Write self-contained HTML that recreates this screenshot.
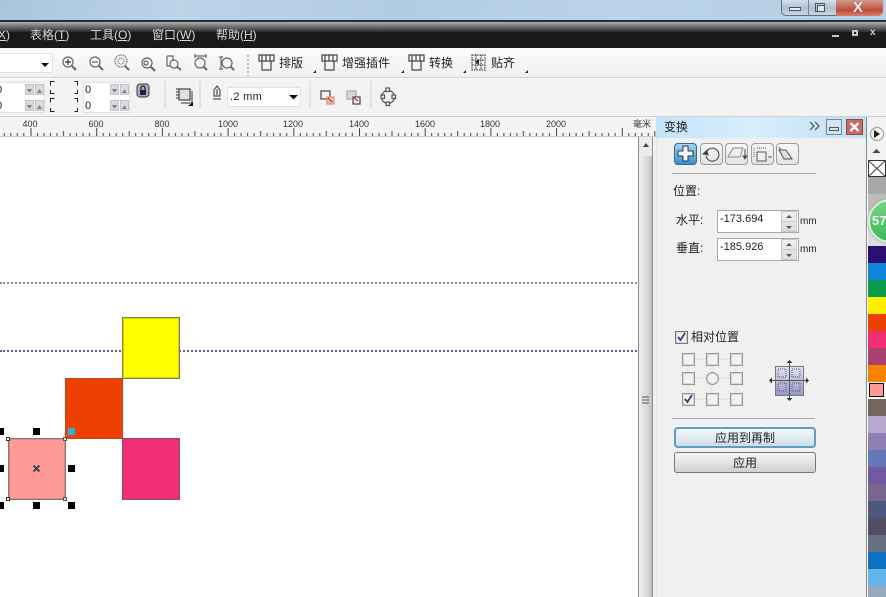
<!DOCTYPE html>
<html><head><meta charset="utf-8">
<style>
html,body{margin:0;padding:0}
body{width:886px;height:597px;overflow:hidden;position:relative;background:#fff;font-family:"Liberation Sans","Noto Sans CJK SC",sans-serif;color:#222}
.a{position:absolute}
.t{position:absolute;white-space:nowrap;line-height:14px}
.m{color:#d8d8d8;font-size:12px;top:28px}
.b{font-size:12px;color:#222}
.r{font-size:9px;color:#333;top:119px;line-height:11px;transform:translateX(-50%)}
.inp{position:absolute;background:#fff;border:1px solid #e2e2e2;box-sizing:border-box}
.sp{position:absolute;width:9px;height:11px;background:#d8dce0;border:1px solid #c4c4c4;box-sizing:border-box}
.cb{position:absolute;width:13px;height:13px;box-sizing:border-box;border:1px solid #969696;background:#f2f2f2;box-shadow:inset 0 0 0 1px #d6d6d6}
.h{position:absolute;width:7px;height:7px;background:#000}
.c{position:absolute;left:868px;width:18px;height:17px}
.tb{position:absolute;top:143px;width:23px;height:22px;box-sizing:border-box;border:1px solid #9c9c9c;border-radius:4px;background:linear-gradient(#f8f8f8,#e4e4e4)}
</style></head><body>

<!-- desktop title bar -->
<div class="a" style="left:0;top:0;width:886px;height:20px;background:linear-gradient(100deg,#a9c5de 0%,#bcd3e8 20%,#b2cce3 45%,#bad3e9 70%,#b5cee4 100%)"></div>
<div class="a" style="left:781px;top:0;width:55px;height:16px;box-sizing:border-box;border:1px solid #5b6f84;border-top:0;border-right:0;border-radius:0 0 0 5px;background:linear-gradient(#d4dfe9,#aebfd0 55%,#c9d6e2)"></div>
<div class="a" style="left:808px;top:0;width:1px;height:16px;background:#6f8498"></div>
<div class="a" style="left:836px;top:0;width:47px;height:16px;border-radius:0 0 5px 0;background:linear-gradient(#d09a90,#bc4a3a 65%,#d8806f)"></div>
<div class="a" style="left:789px;top:7px;width:12px;height:4px;box-sizing:border-box;background:#e6edf3;border:1px solid #445566"></div>
<div class="a" style="left:817px;top:5px;width:8px;height:7px;box-sizing:border-box;background:#dfe7ee;border:1px solid #445566"></div>
<div class="a" style="left:815px;top:3px;width:10px;height:9px;box-sizing:border-box;border:1px solid #445566"></div>
<div class="t" style="left:853px;top:1px;font-size:15px;font-weight:bold;color:#f5f0ee;text-shadow:0 0 1px #555">X</div>

<!-- menu bar -->
<div class="a" style="left:0;top:20px;width:886px;height:2px;background:#20303c"></div>
<div class="a" style="left:0;top:22px;width:886px;height:11px;background:linear-gradient(#aeaeaa,#1c1c1c)"></div>
<div class="a" style="left:0;top:32px;width:886px;height:16px;background:#1a1a1a"></div>
<div class="t m" style="left:-2px"><u>X</u>)</div>
<div class="t m" style="left:30px">表格(<u>T</u>)</div>
<div class="t m" style="left:90px">工具(<u>O</u>)</div>
<div class="t m" style="left:152px">窗口(<u>W</u>)</div>
<div class="t m" style="left:216px">帮助(<u>H</u>)</div>
<div class="a" style="left:832px;top:35px;width:7px;height:2px;background:#c8c8c8"></div>
<div class="a" style="left:852px;top:30px;width:6px;height:6px;box-sizing:border-box;border:2px solid #c8c8c8"></div>
<div class="t" style="left:870px;top:26px;font-size:10px;font-weight:bold;color:#c8c8c8">x</div>

<!-- toolbars -->
<div class="a" style="left:0;top:48px;width:886px;height:30px;background:linear-gradient(#fbfbfb,#f0f0f0)"></div>
<div class="a" style="left:0;top:77px;width:886px;height:1px;background:#d0d0d0"></div>
<div class="a" style="left:0;top:78px;width:886px;height:38px;background:#f3f3f3;border-top:1px solid #fdfdfd;box-sizing:border-box"></div>
<div class="a" style="left:0;top:116px;width:886px;height:1px;background:#cfcfcf"></div>

<div class="inp" style="left:-2px;top:53px;width:55px;height:20px"></div>
<!-- prop bar fields -->
<div class="inp" style="left:-2px;top:82px;width:47px;height:31px"></div>
<div class="inp" style="left:83px;top:82px;width:47px;height:31px"></div>
<div class="sp" style="left:25px;top:84px"></div><div class="sp" style="left:35px;top:84px"></div>
<div class="sp" style="left:25px;top:100px"></div><div class="sp" style="left:35px;top:100px"></div>
<div class="sp" style="left:110px;top:84px"></div><div class="sp" style="left:120px;top:84px"></div>
<div class="sp" style="left:110px;top:100px"></div><div class="sp" style="left:120px;top:100px"></div>
<div class="inp" style="left:227px;top:87px;width:74px;height:20px"></div>

<svg class="a" style="left:0;top:48px" width="660" height="69" fill="none" stroke="#555" stroke-width="1.2">
  <path d="M41 15h8l-4 4z" fill="#111" stroke="none"/>
  <g stroke="#666">
    <circle cx="68" cy="14" r="5"/><path d="M72 18l4 4" stroke-width="2"/><path d="M65 14h6M68 11v6" stroke="#333"/>
    <circle cx="95" cy="14" r="5"/><path d="M99 18l4 4" stroke-width="2"/><path d="M92 14h6"/>
    <circle cx="121" cy="13" r="6" stroke-dasharray="1.5 1"/><circle cx="121" cy="13" r="3" stroke-dasharray="1 1"/><path d="M125 18l4 4" stroke-width="2"/>
    <circle cx="147" cy="15" r="5"/><circle cx="146" cy="15" r="2"/><path d="M151 19l4 4" stroke-width="2"/>
    <path d="M167 8h6v5M167 8v10h4"/><circle cx="174" cy="16" r="4"/><path d="M177 19l4 3" stroke-width="2"/>
    <path d="M195 8h11M195 6v4M206 6v4"/><circle cx="200" cy="15" r="5"/><path d="M204 19l3 3" stroke-width="2"/>
    <path d="M219 9h4M221 9v12M219 21h4"/><circle cx="227" cy="15" r="5"/><path d="M231 19l3 3" stroke-width="2"/>
  </g>
  <path d="M248 7v21" stroke="#bbb" stroke-dasharray="2 2" stroke-width="2"/>
  <g stroke="#444">
    <path d="M259 7h15v6h-15zM262 7v6M266 7v6M270 7v6M262 13v9h9v-9"/>
    <path d="M322 7h15v6h-15zM325 7v6M329 7v6M333 7v6M325 13v9h9v-9"/>
    <path d="M409 7h15v6h-15zM412 7v6M416 7v6M420 7v6M412 13v9h9v-9"/>
    <path d="M472 7h13v15h-13zM472 12h13M472 17h13M476 7v15M481 7v15" stroke-dasharray="1.5 1"/>
  </g>
  <path d="M475 14l4-3v6z" fill="#333" stroke="none"/>
  <g fill="#222" stroke="none">
    <path d="M316 25v-3l-3 3zM404 25v-3l-3 3zM466 25v-3l-3 3zM528 25v-3l-3 3z"/>
  </g>
  <!-- prop bar -->
  <g stroke="#222" stroke-width="1">
    <path d="M54.500 33.500h-4v4M50.500 42v3.500h4M54.500 50.500h-4v4M50.500 60v3.500h4M74.500 33.500h3v4M77.500 42v3.500h-3M74.500 50.500h3v4M77.500 60v3.500h-3"/>
  </g>
  <g fill="#7c8088" stroke="none">
    <path d="M27 41l5 0-2.500 4zM37 45h5l-2.500-4zM27 57h5l-2.500 4zM37 61h5l-2.500-4zM112 41h5l-2.500 4zM122 45h5l-2.500-4zM112 57h5l-2.500 4zM122 61h5l-2.500-4z"/>
  </g>
  <rect x="137" y="36" width="12" height="13" rx="3" fill="#a9a9c0" stroke="#555"/>
  <rect x="140" y="42" width="6" height="5" fill="#222040" stroke="none"/>
  <path d="M141 42v-2a2 2 0 0 1 4 0v2" stroke="#222040"/>
  <path d="M165 33v27M200 33v27M310 33v27M371 33v27" stroke="#d6d6d6"/>
  <rect x="179" y="41" width="11" height="11" fill="#dfdfe4" stroke="#444"/>
  <path d="M176 41h3M176 44h3M176 47h3M176 50h3M181 55h11v-12" stroke="#555"/>
  <path d="M188 58h5v-4z" fill="#111" stroke="none"/>
  <path d="M214 42l3-4 3 4v6h-6z" fill="#eee" stroke="#555"/><path d="M217 41v6M213 51h8" stroke="#555"/>
  <path d="M289 47h9l-4.500 4.500z" fill="#111" stroke="none"/>
  <rect x="321" y="43" width="9" height="8" fill="#f3f3f3" stroke="#444"/>
  <rect x="327" y="49" width="7" height="7" fill="#f0b8a8" stroke="#e09080"/>
  <path d="M328 50l4 4" stroke="#b63820"/>
  <rect x="347" y="43" width="9" height="8" fill="#d5d5e8" stroke="#aaa"/>
  <rect x="353" y="49" width="7" height="7" fill="#f3e8e2" stroke="#444"/>
  <path d="M354 50l4 3" stroke="#b63820"/>
  <circle cx="388" cy="49" r="6.500" stroke="#555"/>
  <g fill="#f2f2f2" stroke="#555"><rect x="386" y="40" width="3.500" height="3.500"/><rect x="386" y="54" width="3.500" height="3.500"/><rect x="381" y="47" width="3.500" height="3.500"/><rect x="392" y="47" width="3.500" height="3.500"/></g>
</svg>
<div class="t b" style="left:279px;top:56px">排版</div>
<div class="t b" style="left:342px;top:56px">增强插件</div>
<div class="t b" style="left:429px;top:56px">转换</div>
<div class="t b" style="left:491px;top:56px">贴齐</div>

<div class="t" style="left:-4px;top:83px;font-size:11px">0</div>
<div class="t" style="left:-4px;top:99px;font-size:11px">0</div>
<div class="t" style="left:85px;top:83px;font-size:11px">0</div>
<div class="t" style="left:85px;top:99px;font-size:11px">0</div>
<div class="t" style="left:230px;top:90px;font-size:11px;letter-spacing:.3px">.2 mm</div>

<!-- ruler -->
<div class="a" style="left:0;top:117px;width:656px;height:20px;background:#f4f4f4;border-bottom:1px solid #c8c8c8;box-sizing:border-box"></div>
<svg class="a" style="left:0;top:117px" width="656" height="20">
  <defs><pattern id="p" x="30.500" y="0" width="65.700" height="20" patternUnits="userSpaceOnUse">
    <path d="M.5 11v8M7 16v3M13.500 16v3M20 16v3M26.500 16v3M33 14v5M39.500 16v3M46 16v3M52.500 16v3M59 16v3" stroke="#444" fill="none"/>
  </pattern></defs>
  <rect width="656" height="20" fill="url(#p)"/>
</svg>
<div class="t r" style="left:30px">400</div>
<div class="t r" style="left:96px">600</div>
<div class="t r" style="left:162px">800</div>
<div class="t r" style="left:228px">1000</div>
<div class="t r" style="left:293px">1200</div>
<div class="t r" style="left:359px">1400</div>
<div class="t r" style="left:425px">1600</div>
<div class="t r" style="left:490px">1800</div>
<div class="t r" style="left:556px">2000</div>
<div class="t r" style="left:642px">毫米</div>

<!-- canvas guides -->
<div class="a" style="left:0;top:282px;width:637px;height:0;border-top:2px dotted #8a8aa8"></div>
<div class="a" style="left:0;top:350px;width:637px;height:0;border-top:2px dotted #5f5f92"></div>

<!-- shapes -->
<div class="a" style="left:122px;top:317px;width:58px;height:62px;box-sizing:border-box;background:#ffff00;border:1px solid #85803c;box-shadow:inset 0 0 0 1px rgba(133,128,60,.35)"></div>
<div class="a" style="left:65px;top:378px;width:58px;height:61px;box-sizing:border-box;background:#ee4000;border:1px solid #c04a20"></div>
<div class="a" style="left:122px;top:438px;width:58px;height:62px;box-sizing:border-box;background:#f22e74;border:1px solid #a5456c;box-shadow:inset 0 0 0 1px rgba(165,69,108,.35)"></div>
<div class="a" style="left:8px;top:438px;width:58px;height:62px;box-sizing:border-box;background:#ff9a96;border:1px solid #8c7272;box-shadow:inset 0 0 0 1px rgba(140,114,114,.35)"></div>
<div class="a" style="left:68px;top:428px;width:7px;height:7px;background:#2fb0dc"></div>
<div class="h" style="left:-3px;top:428px"></div><div class="h" style="left:33px;top:428px"></div>
<div class="h" style="left:-3px;top:465px"></div><div class="h" style="left:68px;top:465px"></div>
<div class="h" style="left:-3px;top:502px"></div><div class="h" style="left:33px;top:502px"></div><div class="h" style="left:68px;top:502px"></div>
<div class="a" style="left:6px;top:437px;width:2px;height:2px;background:#fff;border:1px solid #333"></div>
<div class="a" style="left:63px;top:437px;width:2px;height:2px;background:#ddd;border:1px solid #555"></div>
<div class="a" style="left:6px;top:497px;width:2px;height:2px;background:#fff;border:1px solid #333"></div>
<div class="a" style="left:63px;top:497px;width:2px;height:2px;background:#ddd;border:1px solid #555"></div>
<svg class="a" style="left:32px;top:464px" width="10" height="10"><path d="M1.500 1.500l6 6M7.500 1.500l-6 6" stroke="#3c4a50" stroke-width="2"/></svg>

<!-- scrollbar -->
<div class="a" style="left:638px;top:137px;width:1px;height:460px;background:#8c8c8c"></div>
<div class="a" style="left:639px;top:137px;width:13px;height:460px;background:#ececec"></div>
<div class="a" style="left:639px;top:156px;width:13px;height:441px;background:linear-gradient(90deg,#f0f0f0,#d6d6d6 70%,#bcbcbc)"></div>
<div class="a" style="left:652px;top:137px;width:1px;height:460px;background:#909090"></div>
<svg class="a" style="left:642px;top:142px" width="8" height="6"><path d="M4 1l3 4H1z" fill="#444"/></svg>
<svg class="a" style="left:642px;top:396px" width="8" height="9"><path d="M0 1h7M0 4h7M0 7h7" stroke="#555"/></svg>

<!-- panel -->
<div class="a" style="left:653px;top:137px;width:214px;height:460px;background:#f0f0f0"></div>
<div class="a" style="left:656px;top:137px;width:1px;height:460px;background:#e6e6e6"></div>
<div class="a" style="left:656px;top:117px;width:211px;height:21px;background:linear-gradient(90deg,#c2e3f8,#d8eefc 45%,#bfe0f6)"></div>
<div class="t" style="left:664px;top:120px;font-size:12px;color:#222">变换</div>
<svg class="a" style="left:809px;top:121px" width="12" height="10" fill="none" stroke="#666" stroke-width="1.400"><path d="M1 1l4 4-4 4M6 1l4 4-4 4"/></svg>
<div class="a" style="left:826px;top:119px;width:16px;height:16px;box-sizing:border-box;border:1px solid #6a8caa;background:#d6e4f0"></div>
<div class="a" style="left:829px;top:127px;width:10px;height:4px;box-sizing:border-box;border:1px solid #555"></div>
<div class="a" style="left:846px;top:119px;width:17px;height:16px;box-sizing:border-box;border:1px solid #8a4a40;background:#c86a5c"></div>
<svg class="a" style="left:849px;top:122px" width="11" height="10"><path d="M1.500 1l8 8M9.500 1l-8 8" stroke="#fff" stroke-width="2.400"/></svg>

<!-- tabs -->
<div class="tb" style="left:674px;border-color:#2b6b9c;background:linear-gradient(#a9d3ee,#3f8fc8)"></div>
<div class="tb" style="left:700px"></div>
<div class="tb" style="left:725px"></div>
<div class="tb" style="left:751px"></div>
<div class="tb" style="left:776px"></div>
<svg class="a" style="left:674px;top:143px" width="125" height="22" fill="none" stroke="#555">
  <path d="M9 3h5v5h5v5h-5v5H9v-5H4V8h5z" fill="#f4f8fb" stroke="#1c3c58"/>
  <path d="M33 8a6.500 6.500 0 1 1-1 5" stroke-width="1.200"/><path d="M29 11l4-4 1 5z" fill="#444"/>
  <path d="M54 14l5-9h10l-3 9z" fill="#eee" stroke="#8c8c8c"/><path d="M71 6v9" stroke="#444"/><path d="M69 13l2 3 2-3z" fill="#333"/>
  <rect x="83" y="9" width="9" height="9" fill="#eee"/><path d="M80 5v10M83 5h10" stroke-dasharray="1 1"/><path d="M94 14h4"/>
  <path d="M105 7h7l6 9h-8z" fill="#ddd"/><path d="M105 4l2 3"/>
</svg>
<div class="a" style="left:672px;top:173px;width:144px;height:1px;background:#a8a8a8"></div>

<div class="t b" style="left:673px;top:184px">位置:</div>
<div class="t b" style="left:676px;top:213px">水平:</div>
<div class="t b" style="left:676px;top:241px">垂直:</div>
<div class="inp" style="left:717px;top:210px;width:82px;height:23px;border-color:#a8a8a8"></div>
<div class="inp" style="left:717px;top:238px;width:82px;height:23px;border-color:#a8a8a8"></div>
<div class="t" style="left:720px;top:212px;font-size:11px">-173.694</div>
<div class="t" style="left:720px;top:240px;font-size:11px">-185.926</div>
<div class="a" style="left:781px;top:211px;width:16px;height:21px;box-sizing:border-box;border:1px solid #c8c8c8;background:linear-gradient(#f0f0f0,#dcdcdc)"></div>
<div class="a" style="left:781px;top:239px;width:16px;height:21px;box-sizing:border-box;border:1px solid #c8c8c8;background:linear-gradient(#f0f0f0,#dcdcdc)"></div>
<svg class="a" style="left:781px;top:211px" width="16" height="50" fill="#555577"><path d="M8 4l3 3H5zM8 18l3-3H5zM8 32l3 3H5zM8 46l3-3H5z"/><path d="M1 10.500h14M1 38.500h14" stroke="#c8c8c8"/></svg>
<div class="t" style="left:800px;top:215px;font-size:10px">mm</div>
<div class="t" style="left:800px;top:243px;font-size:10px">mm</div>

<div class="cb" style="left:675px;top:331px;border-color:#777"></div>
<svg class="a" style="left:675px;top:331px" width="13" height="13"><path d="M3 6l2.500 3L10 2" fill="none" stroke="#3a3a78" stroke-width="1.800"/></svg>
<div class="t b" style="left:691px;top:330px">相对位置</div>

<svg class="a" style="left:680px;top:350px" width="70" height="60"><path d="M8 9h48M8 9v41M56 9v41M8 28h48M8 49h48M32 9v41" stroke="#dcdcdc" fill="none"/></svg>
<div class="cb" style="left:682px;top:353px"></div><div class="cb" style="left:706px;top:353px"></div><div class="cb" style="left:730px;top:353px"></div>
<div class="cb" style="left:682px;top:372px"></div><div class="cb" style="left:706px;top:372px;border-radius:50%"></div><div class="cb" style="left:730px;top:372px"></div>
<div class="cb" style="left:682px;top:393px"></div><div class="cb" style="left:706px;top:393px"></div><div class="cb" style="left:730px;top:393px"></div>
<svg class="a" style="left:682px;top:393px" width="13" height="13"><path d="M3 6l2.500 3L10 2" fill="none" stroke="#3a3a78" stroke-width="1.800"/></svg>

<svg class="a" style="left:769px;top:360px" width="42" height="42">
  <defs><linearGradient id="g" x1="0" y1="0" x2="0" y2="1"><stop offset="0" stop-color="#e4e4f6"/><stop offset="1" stop-color="#9494c8"/></linearGradient></defs>
  <rect x="6.500" y="6.500" width="28" height="29" fill="url(#g)" stroke="#777"/>
  <path d="M9 9h8v8H9zM23 9h8v8h-8zM9 23h8v8H9zM23 23h8v8h-8z" fill="none" stroke="#556" stroke-dasharray="1 1"/>
  <path d="M20.500 2v38M1 20.500h38" stroke="#555"/>
  <path d="M20.500 0l3 3h-6zM20.500 41l3-3h-6zM0 20.500l3-3v6zM40 20.500l-3-3v6z" fill="#333"/>
</svg>

<div class="a" style="left:672px;top:418px;width:143px;height:1px;background:#a8a8a8"></div>
<div class="a" style="left:674px;top:427px;width:142px;height:21px;box-sizing:border-box;border:2px solid #5c9fc4;border-radius:4px;background:linear-gradient(#f4f8fa,#cfdde6)"></div>
<div class="a" style="left:674px;top:452px;width:142px;height:21px;box-sizing:border-box;border:1px solid #777;border-radius:3px;background:linear-gradient(#f6f6f6,#d0d0d0)"></div>
<div class="t b" style="left:715px;top:431px">应用到再制</div>
<div class="t b" style="left:733px;top:456px">应用</div>

<!-- palette -->
<div class="a" style="left:866px;top:117px;width:1px;height:480px;background:#8a8a8a"></div>
<div class="a" style="left:867px;top:117px;width:19px;height:43px;background:#f2f2f2"></div>
<div class="a" style="left:870px;top:127px;width:12px;height:12px;border-radius:50%;background:#f4f4f4;border:1px solid #999"></div>
<svg class="a" style="left:873px;top:130px" width="8" height="8"><path d="M1 0l6 4-6 4z" fill="#222"/></svg>
<svg class="a" style="left:872px;top:148px" width="9" height="6"><path d="M4.500 1l4 4h-8z" fill="#444"/></svg>
<div class="a" style="left:868px;top:160px;width:18px;height:17px;box-sizing:border-box;border:1px solid #333;background:#fff"></div>
<svg class="a" style="left:868px;top:160px" width="18" height="17"><path d="M0 0l18 17M18 0L0 17" stroke="#444"/></svg>
<div class="c" style="top:177px;background:#a8a8a8"></div>
<div class="c" style="top:194px;background:#bcbcbc"></div>
<div class="c" style="top:211px;height:35px;background:#dcdcdc"></div>
<div class="c" style="top:246px;background:#2c1070"></div>
<div class="c" style="top:263px;background:#0e86dc"></div>
<div class="c" style="top:280px;background:#0a9a4c"></div>
<div class="c" style="top:297px;background:#ffee00"></div>
<div class="c" style="top:314px;background:#ee4000"></div>
<div class="c" style="top:331px;background:#f22e74"></div>
<div class="c" style="top:348px;background:#a84070"></div>
<div class="c" style="top:365px;background:#f58200"></div>
<div class="c" style="top:382px;background:#fff"></div>
<div class="a" style="left:869px;top:383px;width:15px;height:14px;box-sizing:border-box;background:#ff9a96;border:1px solid #111"></div>
<div class="c" style="top:399px;background:#74665e"></div>
<div class="c" style="top:416px;background:#b8a8d0"></div>
<div class="c" style="top:433px;background:#9080b4"></div>
<div class="c" style="top:450px;background:#6478b8"></div>
<div class="c" style="top:467px;background:#7458a0"></div>
<div class="c" style="top:484px;background:#786890"></div>
<div class="c" style="top:501px;background:#4c5880"></div>
<div class="c" style="top:518px;background:#544c60"></div>
<div class="c" style="top:535px;background:#667080"></div>
<div class="c" style="top:552px;background:#0e72c4"></div>
<div class="c" style="top:569px;background:#64b4ec"></div>
<div class="c" style="top:586px;height:11px;background:#94aabc"></div>

<!-- green badge -->
<div class="a" style="left:868px;top:199px;width:44px;height:44px;box-sizing:border-box;border-radius:50%;border:2px solid #dceedc;background:linear-gradient(#74d486,#3eb85c);box-shadow:0 0 2px #888"></div>
<div class="t" style="left:872px;top:214px;font-size:13px;font-weight:bold;color:#eefbe8">57</div>

</body></html>
